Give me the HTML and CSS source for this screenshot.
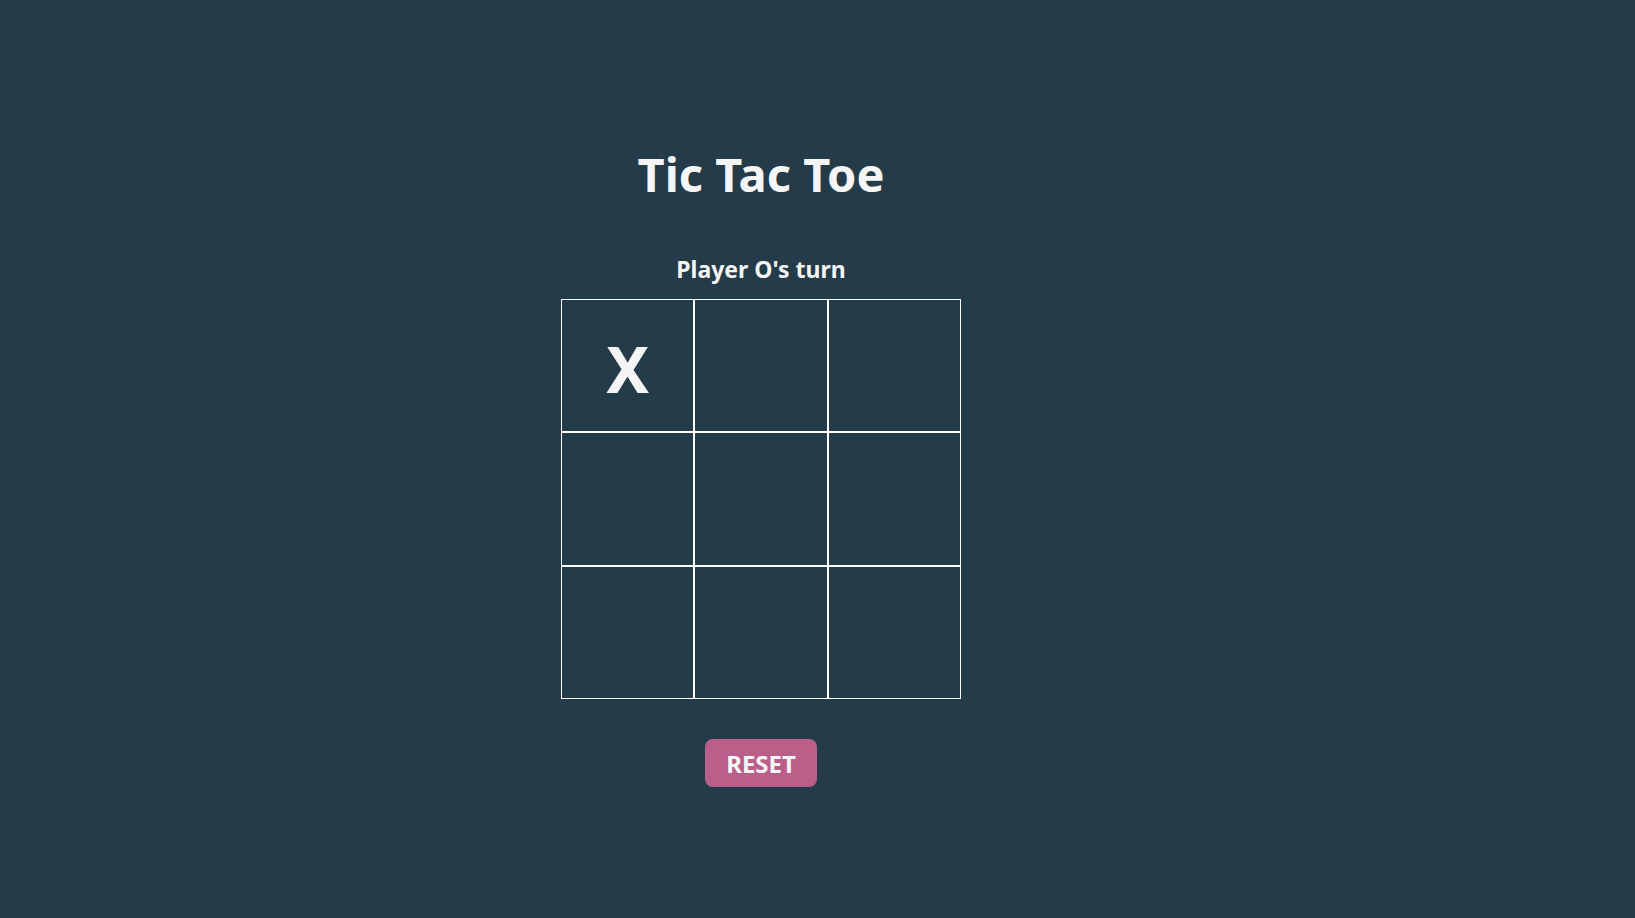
FILE: index.html
```html
<!DOCTYPE html>
<html lang="en">
<head>
<meta charset="utf-8">
<meta name="viewport" content="width=device-width, initial-scale=1">
<title>Tic Tac Toe</title>
<link rel="stylesheet" href="styles.css">
</head>
<body>
<main class="game">
  <h1 class="title">Tic Tac Toe</h1>
  <h2 class="status">Player O's turn</h2>
  <div class="board">
    <button class="cell" type="button" aria-label="Cell 1, X">X</button>
    <button class="cell" type="button" aria-label="Cell 2"></button>
    <button class="cell" type="button" aria-label="Cell 3"></button>
    <button class="cell" type="button" aria-label="Cell 4"></button>
    <button class="cell" type="button" aria-label="Cell 5"></button>
    <button class="cell" type="button" aria-label="Cell 6"></button>
    <button class="cell" type="button" aria-label="Cell 7"></button>
    <button class="cell" type="button" aria-label="Cell 8"></button>
    <button class="cell" type="button" aria-label="Cell 9"></button>
  </div>
  <button class="reset" type="button">RESET</button>
</main>
</body>
</html>
```
FILE: styles.css
```css
* {
  box-sizing: border-box;
}

body {
  margin: 0;
  min-height: 100vh;
  background: #243b4a;
  color: #f5f5f5;
  font-family: "Noto Sans", "Open Sans", sans-serif;
  font-weight: 700;
}

.game {
  display: flex;
  flex-direction: column;
  align-items: center;
  padding: 142px 113px 0 0;
}

.title {
  margin: 0 0 47px;
  font-size: 47px;
  line-height: 64px;
}

.status {
  margin: 0 0 14px;
  font-size: 23px;
  line-height: 32px;
}

.board {
  display: grid;
  grid-template-columns: repeat(3, 1fr);
  grid-template-rows: repeat(3, minmax(0, 1fr));
  width: 400px;
  max-width: 100%;
  aspect-ratio: 1;
  margin-bottom: 40px;
}

.cell {
  display: grid;
  place-items: center;
  padding: 6px 0 0;
  border: 1px solid #fff;
  background: none;
  color: inherit;
  font: inherit;
  font-size: 64px;
  line-height: 80px;
  cursor: pointer;
}

.reset {
  padding: 9px 21px 7px;
  border: 0;
  border-radius: 8px;
  background: #b95f89;
  color: inherit;
  font: inherit;
  font-size: 24px;
  line-height: 32px;
  cursor: pointer;
}
```
